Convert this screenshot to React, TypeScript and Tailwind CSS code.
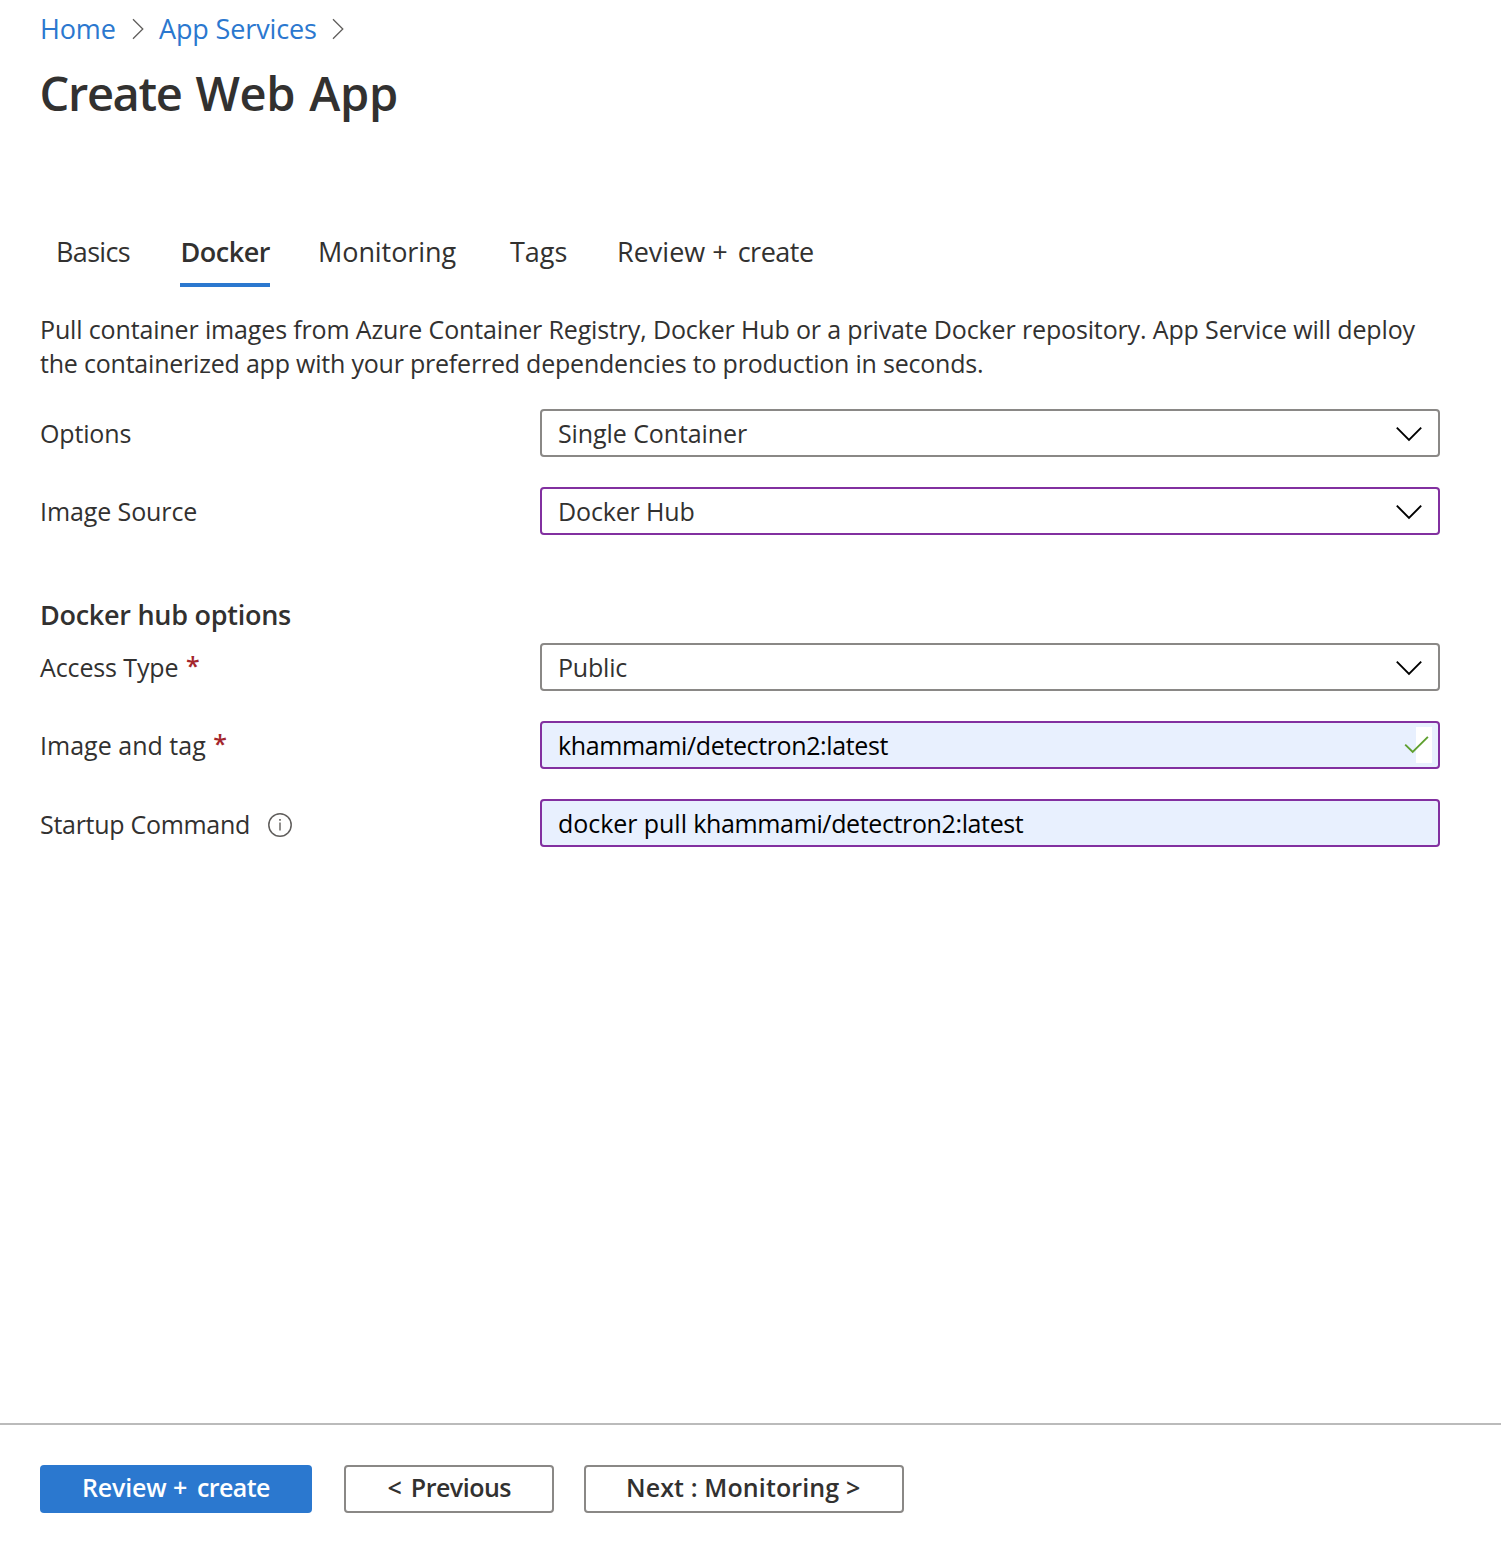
import type { ReactNode } from "react";

function CrumbChevron() {
  return (
    <svg width="12" height="22" viewBox="0 0 12 22" fill="none" stroke="#605e5c" strokeWidth="1.3">
      <path d="M1 1.2 10.8 11 1 20.8" />
    </svg>
  );
}

function DropChevron() {
  return (
    <svg className="mt-0.5" width="28" height="16" viewBox="0 0 28 16" fill="none" stroke="#000" strokeWidth="1.9">
      <path d="M1.8 1.7 14 13.8 26.2 1.7" />
    </svg>
  );
}

function InfoIcon() {
  return (
    <svg className="mt-0.5" width="24" height="24" viewBox="0 0 24 24" fill="none" stroke="#605e5c">
      <circle cx="12" cy="12" r="11.2" strokeWidth="1.5" />
      <path d="M12 9.5v8" strokeWidth="1.4" />
      <path d="M12 6v1.8" strokeWidth="1.6" />
    </svg>
  );
}

function Required() {
  return <span className="-mt-0.5 mb-0.5 ml-[7.5px] text-[25px] font-semibold leading-[34px] text-[#a4262c]">*</span>;
}

function Row({ label, children }: { label: ReactNode; children: ReactNode }) {
  return (
    <div className="flex h-12 items-center">
      <div className="flex w-[500px] shrink-0 items-center">{label}</div>
      {children}
    </div>
  );
}

function Select({ className, children }: { className: string; children: ReactNode }) {
  return (
    <div className={`flex h-12 w-[900px] items-center justify-between rounded-[4px] border-2 bg-white pr-[15px] pl-4 ${className}`}>
      {children}
      <DropChevron />
    </div>
  );
}

export default function App() {
  return (
    <div className="flex h-[1553px] w-[1501px] flex-col bg-white font-['Open_Sans',sans-serif] text-[25px] leading-[34px] whitespace-nowrap text-[#323130]">
      <nav className="flex h-[47px] items-start pt-2.5 text-[27px] leading-[37px] text-[#2b78cf]">
        <a className="ml-10 w-[92px] tracking-[-0.15px]">Home</a>
        <span className="mt-2 w-[27px]"><CrumbChevron /></span>
        <a className="w-[173px] tracking-[-0.14px]">App Services</a>
        <span className="mt-2"><CrumbChevron /></span>
      </nav>

      <h1 className="mt-3.5 ml-[39.5px] text-[47px] leading-[64px] font-semibold tracking-[-0.3px]">
        <span className="tracking-[-1.35px]">Create</span> <span className="ml-0.5">Web</span> <span className="ml-0.5">App</span>
      </h1>

      <div className="mt-[108px] ml-14 flex h-[54px] text-[27px] leading-[37px]">
        <div className="w-[124px] tracking-[-0.65px]">Basics</div>
        <div className="w-[90px] border-b-4 border-[#2b78cf] pl-[0.5px] font-semibold tracking-[-0.5px]">Docker</div>
        <div className="ml-12 w-[192px] tracking-[-0.075px]">Monitoring</div>
        <div className="w-[107px]">Tags</div>
        <div>Review + <span className="ml-[3px] tracking-[-0.5px]">create</span></div>
      </div>

      <p className="mt-[25px] ml-10">
        <span className="tracking-[-0.143px]">
          Pull container images from Azure Container Registry, Docker Hub or a private Docker repository. App Service will deploy
        </span>
        <br />
        <span className="tracking-[-0.211px]">
          the containerized app with your preferred dependencies to production in seconds.
        </span>
      </p>

      <div className="mt-[29px] ml-10 flex flex-col gap-[30px]">
        <Row label={<span className="tracking-[-0.15px]">Options</span>}>
          <Select className="border-[#8a8886]"><span className="tracking-[-0.09px]">Single Container</span></Select>
        </Row>
        <Row label={<span className="tracking-[-0.1px]">Image Source</span>}>
          <Select className="border-[#8230a0]"><span className="tracking-[-0.15px]">Docker Hub</span></Select>
        </Row>
      </div>

      <h2 className="mt-[61px] ml-10 text-[27px] leading-[37px] font-semibold tracking-[-0.27px]">Docker hub options</h2>

      <div className="mt-2.5 ml-10 flex flex-col gap-[30px]">
        <Row label={<><span className="tracking-[-0.12px]">Access Type</span><Required /></>}>
          <Select className="border-[#8a8886]"><span className="tracking-[-0.2px]">Public</span></Select>
        </Row>
        <Row label={<><span className="tracking-[0.02px]">Image and tag</span><Required /></>}>
          <div className="flex h-12 w-[900px] items-center justify-between rounded-[4px] border-2 border-[#8230a0] bg-[#e8f0fe] pr-1.5 pl-4 text-black">
            <span className="tracking-[-0.374px]">khammami/detectron2:latest</span>
            <span className="flex h-9 w-4 items-center justify-end bg-white">
              <svg className="mr-[3.5px] shrink-0" width="25" height="18" viewBox="0 0 25 18" fill="none" stroke="#5fa030" strokeWidth="1.9">
                <path d="M1.2 8.6 8.7 16 23.9 0.9" />
              </svg>
            </span>
          </div>
        </Row>
        <Row
          label={
            <div className="flex items-center pt-0.5">
              <span className="w-[228px] tracking-[-0.29px]">Startup Command</span>
              <InfoIcon />
            </div>
          }
        >
          <div className="flex h-12 w-[900px] items-center rounded-[4px] border-2 border-[#8230a0] bg-[#e8f0fe] pl-4 text-black">
            <span className="tracking-[-0.374px]">
              <span className="tracking-[-0.05px]">docker pull </span>khammami/detectron2:latest
            </span>
          </div>
        </Row>
      </div>

      <footer className="mt-auto flex h-[130px] border-t-2 border-[#bbbbbb] pt-10 font-semibold">
        <button className="ml-10 h-12 w-[272px] rounded-[4px] bg-[#2b78cf] pt-[5px] pb-[9px] pl-[42px] text-left text-white tracking-[-0.15px]">
          Review + <span className="ml-[3.5px] tracking-[-0.6px]">create</span>
        </button>
        <button className="ml-8 h-12 w-[210px] rounded-[4px] border-2 border-[#8a8886] pt-[3px] pb-[7px] pl-[41.5px] text-left">
          &lt; <span className="ml-[2.5px] tracking-[-0.5px]">Previous</span>
        </button>
        <button className="ml-[30px] h-12 w-[320px] rounded-[4px] border-2 border-[#8a8886] pt-[3px] pb-[7px] pl-10 text-left tracking-[0.12px]">Next : Monitoring &gt;</button>
      </footer>
    </div>
  );
}
